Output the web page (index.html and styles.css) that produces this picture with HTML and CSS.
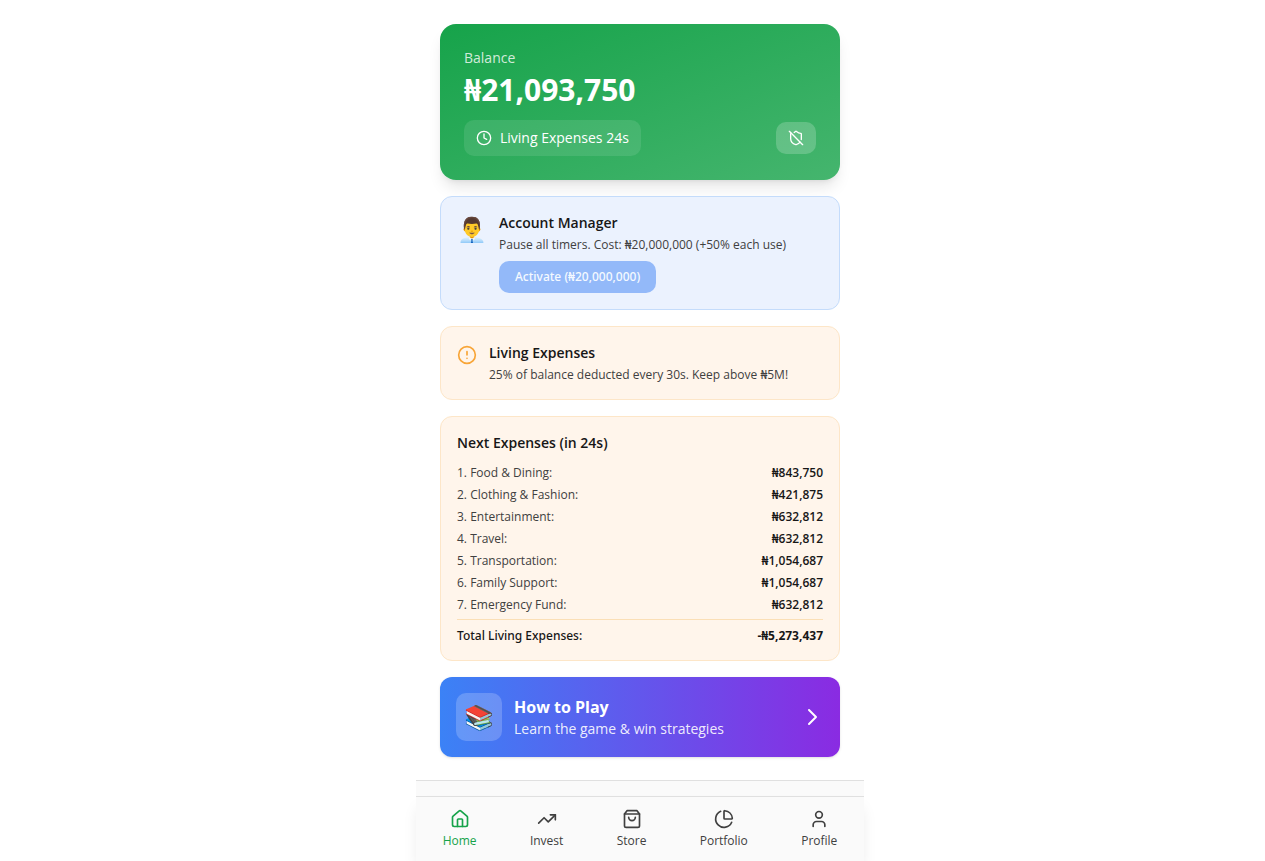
FILE: index.html
```html
<!DOCTYPE html>
<html lang="en">
<head>
<meta charset="utf-8">
<meta name="viewport" content="width=device-width, initial-scale=1">
<title>Home</title>
<link rel="stylesheet" href="styles.css">
</head>
<body>
<div class="app">
  <main class="content">
    <section class="balance">
      <p class="balance-label">Balance</p>
      <p class="balance-amount">₦21,093,750</p>
      <div class="balance-row">
        <div class="timer">
          <svg class="icon icon-sm" viewBox="0 0 24 24" aria-hidden="true"><circle cx="12" cy="12" r="10"/><path d="M12 6v6l4 2"/></svg>
          <span>Living Expenses 24s</span>
        </div>
        <button class="shield" type="button" aria-label="Shield off">
          <svg class="icon icon-sm" viewBox="0 0 24 24" aria-hidden="true"><path d="m2 2 20 20"/><path d="M5 5a1 1 0 0 0-1 1v7c0 5 3.500 7.500 7.670 8.940a1 1 0 0 0 .67.010c2.350-.82 4.480-1.970 5.900-3.710"/><path d="M9.309 3.652A12.252 12.252 0 0 0 11.240 2.280a1.170 1.170 0 0 1 1.520 0C14.510 3.810 17 5 19 5a1 1 0 0 1 1 1v7a9.784 9.784 0 0 1-.08 1.264"/></svg>
        </button>
      </div>
    </section>

    <section class="card card-blue notice">
      <span class="emoji">👨‍💼</span>
      <div>
        <h2 class="card-title">Account Manager</h2>
        <p class="card-text">Pause all timers. Cost: ₦20,000,000 (+50% each use)</p>
        <button class="activate" type="button" disabled>Activate (₦20,000,000)</button>
      </div>
    </section>

    <section class="card card-warm notice">
      <svg class="icon icon-md icon-alert" viewBox="0 0 24 24" aria-hidden="true"><circle cx="12" cy="12" r="10"/><path d="M12 8v4M12 16h.01"/></svg>
      <div>
        <h2 class="card-title">Living Expenses</h2>
        <p class="card-text">25% of balance deducted every 30s. Keep above ₦5M!</p>
      </div>
    </section>

    <section class="card card-warm">
      <h2 class="card-title">Next Expenses (in 24s)</h2>
      <dl class="expenses">
        <div class="expense"><dt>1. Food &amp; Dining:</dt><dd>₦843,750</dd></div>
        <div class="expense"><dt>2. Clothing &amp; Fashion:</dt><dd>₦421,875</dd></div>
        <div class="expense"><dt>3. Entertainment:</dt><dd>₦632,812</dd></div>
        <div class="expense"><dt>4. Travel:</dt><dd>₦632,812</dd></div>
        <div class="expense"><dt>5. Transportation:</dt><dd>₦1,054,687</dd></div>
        <div class="expense"><dt>6. Family Support:</dt><dd>₦1,054,687</dd></div>
        <div class="expense"><dt>7. Emergency Fund:</dt><dd>₦632,812</dd></div>
        <div class="expense total"><dt>Total Living Expenses:</dt><dd>-₦5,273,437</dd></div>
      </dl>
    </section>

    <button class="guide" type="button">
      <span class="emoji guide-emoji">📚</span>
      <span class="guide-copy">
        <span class="guide-title">How to Play</span>
        <span class="guide-text">Learn the game &amp; win strategies</span>
      </span>
      <svg class="icon icon-lg" viewBox="0 0 24 24" aria-hidden="true"><path d="m9 5 7 7-7 7"/></svg>
    </button>
  </main>

  <footer class="footer">
    <nav class="tabs">
      <button class="tab tab-active" type="button">
        <svg class="icon icon-md" viewBox="0 0 24 24" aria-hidden="true"><path d="M15 21v-8a1 1 0 0 0-1-1h-4a1 1 0 0 0-1 1v8"/><path d="M3 10a2 2 0 0 1 .709-1.528l7-5.999a2 2 0 0 1 2.582 0l7 5.999A2 2 0 0 1 21 10v9a2 2 0 0 1-2 2H5a2 2 0 0 1-2-2z"/></svg>
        <span>Home</span>
      </button>
      <button class="tab" type="button">
        <svg class="icon icon-md" viewBox="0 0 24 24" aria-hidden="true"><path d="M22 7l-8.500 8.500-5-5L2 17"/><path d="M16 7h6v6"/></svg>
        <span>Invest</span>
      </button>
      <button class="tab" type="button">
        <svg class="icon icon-md" viewBox="0 0 24 24" aria-hidden="true"><path d="M6 2 3 6v14a2 2 0 0 0 2 2h14a2 2 0 0 0 2-2V6l-3-4z"/><path d="M3 6h18"/><path d="M16 10a4 4 0 0 1-8 0"/></svg>
        <span>Store</span>
      </button>
      <button class="tab" type="button">
        <svg class="icon icon-md" viewBox="0 0 24 24" aria-hidden="true"><path d="M21 12c.552 0 1.005-.449.950-.998a10 10 0 0 0-8.953-8.951c-.55-.055-.998.398-.998.950v8a1 1 0 0 0 1 1z"/><path d="M21.210 15.890A10 10 0 1 1 8 2.830"/></svg>
        <span>Portfolio</span>
      </button>
      <button class="tab" type="button">
        <svg class="icon icon-md" viewBox="0 0 24 24" aria-hidden="true"><path d="M19 21v-2a4 4 0 0 0-4-4H9a4 4 0 0 0-4 4v2"/><circle cx="12" cy="7" r="4"/></svg>
        <span>Profile</span>
      </button>
    </nav>
  </footer>
</div>
</body>
</html>
```

FILE: styles.css
```css
*, *::before, *::after { box-sizing: border-box; }

body {
  margin: 0;
  padding-left: 15px;
  background: #fff;
  color: #171717;
  font-family: "Open Sans", "Noto Sans", sans-serif;
  font-size: 14px;
  line-height: 20px;
}

p, h2, dl, dd { margin: 0; }

button {
  border: 0;
  padding: 0;
  background: none;
  color: inherit;
  font: inherit;
  cursor: pointer;
}

.app {
  display: flex;
  flex-direction: column;
  max-width: 448px;
  min-height: 100vh;
  margin: 0 auto;
}

.content {
  display: flex;
  flex: 1;
  flex-direction: column;
  gap: 16px;
  padding: 24px 24px 16px;
}

.icon {
  display: block;
  flex: none;
  fill: none;
  stroke: currentColor;
  stroke-width: 2;
  stroke-linecap: round;
  stroke-linejoin: round;
}
.icon-sm { width: 16px; height: 16px; }
.icon-md { width: 20px; height: 20px; }
.icon-lg { width: 24px; height: 24px; }

.emoji {
  flex: none;
  font-size: 24px;
  line-height: 32px;
}

.balance {
  padding: 24px;
  border-radius: 16px;
  background: linear-gradient(to bottom right, #16a34a, #45b56e);
  box-shadow: 0 10px 15px -3px rgb(0 0 0 / 10%), 0 4px 6px -4px rgb(0 0 0 / 10%);
  color: #fff;
}
.balance-label { margin-bottom: 4px; color: rgb(255 255 255 / 80%); }
.balance-amount {
  margin-bottom: 12px;
  font-size: 30px;
  font-weight: 700;
  line-height: 36px;
}
.balance-row {
  display: flex;
  align-items: center;
  justify-content: space-between;
}
.timer {
  display: flex;
  align-items: center;
  gap: 8px;
  padding: 8px 12px;
  border-radius: 10px;
  background: rgb(255 255 255 / 10%);
}
.shield {
  padding: 8px 12px;
  border-radius: 10px;
  background: rgb(255 255 255 / 20%);
}

.card {
  padding: 16px;
  border: 1px solid;
  border-radius: 12px;
}
.card-blue { border-color: #c4dcfb; background: #ebf2fe; }
.card-warm { border-color: #fde6c8; background: #fff5eb; }
.card-title { font-size: 14px; font-weight: 600; line-height: 20px; }
.card-text {
  margin-top: 4px;
  color: #404040;
  font-size: 12px;
  line-height: 16px;
}
.notice { display: flex; align-items: flex-start; gap: 12px; }
.icon-alert { margin-top: 2px; color: #f8a537; }
.activate {
  margin-top: 8px;
  padding: 8px 16px;
  border-radius: 10px;
  background: #93b9f9;
  color: #f5f9ff;
  font-family: "Noto Sans", "Open Sans", sans-serif;
  font-size: 12px;
  font-weight: 500;
  line-height: 16px;
  cursor: default;
}

.expenses {
  display: flex;
  flex-direction: column;
  gap: 6px;
  margin-top: 12px;
  font-size: 12px;
  line-height: 16px;
}
.expense { display: flex; justify-content: space-between; }
.expense dt { color: #404040; }
.expense dd { font-weight: 600; }
.total { padding-top: 8px; border-top: 1px solid #fbdfb6; }
.expense.total dt {
  color: #171717;
  font-family: "Noto Sans", "Open Sans", sans-serif;
  font-weight: 500;
}
.expense.total dd { font-weight: 700; }

.guide {
  display: flex;
  align-items: center;
  gap: 12px;
  padding: 16px;
  border-radius: 12px;
  background: linear-gradient(to right, #3b82f6, #8a2be2);
  box-shadow: 0 1px 3px rgb(0 0 0 / 10%), 0 1px 2px -1px rgb(0 0 0 / 10%);
  color: #fff;
  text-align: left;
}
.guide-emoji {
  padding: 8px;
  border-radius: 10px;
  background: rgb(255 255 255 / 20%);
}
.guide-copy { display: flex; flex: 1; flex-direction: column; }
.guide-title { font-size: 16px; font-weight: 700; line-height: 24px; }
.guide-text { color: rgb(255 255 255 / 90%); }

.footer {
  padding-top: 15px;
  border-top: 1px solid #e0e0e0;
  background: #fafafa;
}
.tabs {
  display: flex;
  justify-content: space-around;
  padding: 12px 0;
  border-top: 1px solid #e0e0e0;
  background: #fafafa;
  box-shadow: 0 10px 15px -3px rgb(0 0 0 / 10%);
}
.tab {
  display: flex;
  flex-direction: column;
  align-items: center;
  gap: 4px;
  color: #404040;
  font-size: 12px;
  line-height: 16px;
}
.tab-active { color: #16a34a; }
```
